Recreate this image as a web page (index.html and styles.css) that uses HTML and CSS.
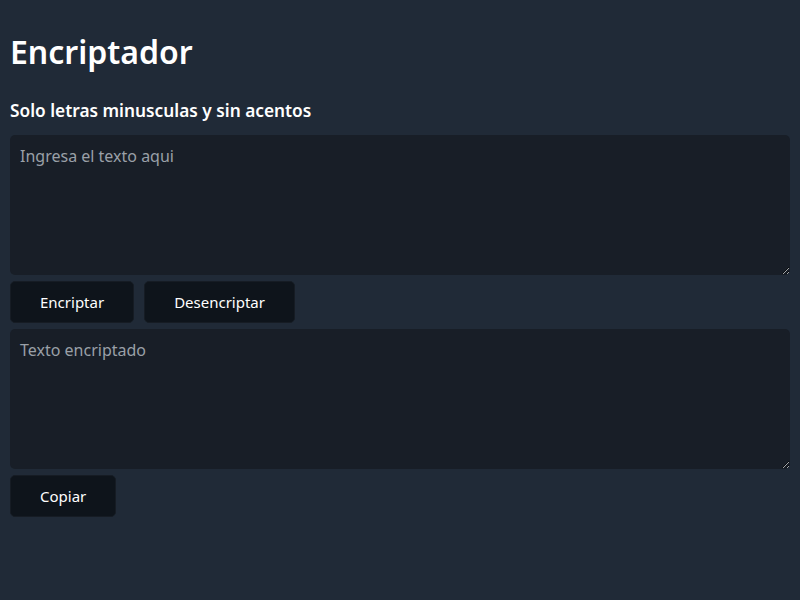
FILE: index.html
```html
<!DOCTYPE html>
<html lang="es">
<head>
<meta charset="utf-8">
<title>Encriptador</title>
<link rel="stylesheet" href="styles.css">
</head>
<body>
<main class="app">
  <h1 class="title">Encriptador</h1>
  <h2 class="subtitle">Solo letras minusculas y sin acentos</h2>
  <textarea class="field" placeholder="Ingresa el texto aqui"></textarea>
  <div class="actions">
    <button class="btn">Encriptar</button>
    <button class="btn">Desencriptar</button>
  </div>
  <textarea class="field" placeholder="Texto encriptado" readonly></textarea>
  <div class="actions">
    <button class="btn">Copiar</button>
  </div>
</main>
</body>
</html>
```
FILE: styles.css
```css
html, body {
  margin: 0;
  padding: 0;
  background: #202a37;
  height: 100%;
}
body {
  font-family: "Noto Sans", "Open Sans", sans-serif;
  color: #ffffff;
}
.app {
  padding: 10px;
  display: flex;
  flex-direction: column;
  gap: 6px;
}
.title {
  font-size: 32px;
  font-weight: 600;
  margin: 23px 0 12px 0;
  line-height: 1.2;
}
.subtitle {
  font-size: 17.3px;
  font-weight: 600;
  margin: 12px 0 7px 0;
  line-height: 1.2;
}
.field {
  box-sizing: border-box;
  width: 100%;
  height: 140px;
  background: #181e27;
  color: #e5e7eb;
  border: none;
  border-radius: 5px;
  padding: 10px;
  font-family: inherit;
  font-size: 16px;
  outline: none;
  resize: vertical;
}
.field::placeholder {
  color: #9aa0a8;
}
.actions {
  display: flex;
  gap: 10px;
}
.btn {
  background: #0e141b;
  color: #ffffff;
  border: 1px solid #161c24;
  border-radius: 5px;
  padding: 9px 29px;
  font-family: inherit;
  font-size: 15px;
  line-height: 22px;
  cursor: pointer;
}
```
